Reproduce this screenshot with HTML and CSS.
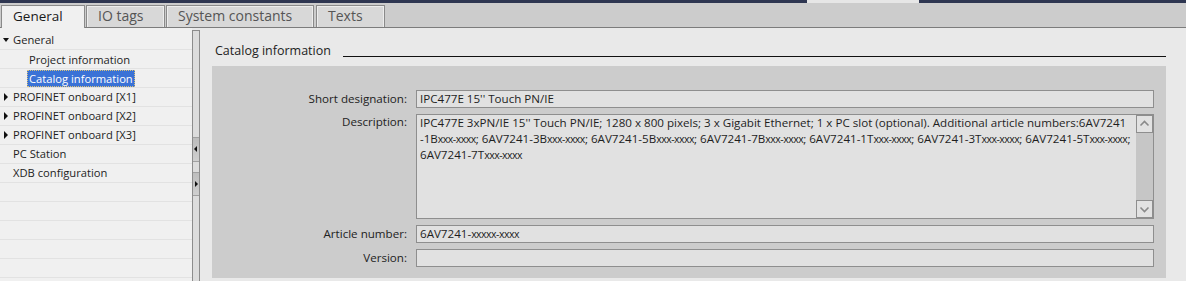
FILE: index.html
```html
<!DOCTYPE html>
<html lang="en">
<head>
  <meta charset="UTF-8">
  <title>Properties - Catalog information</title>
  <link rel="stylesheet" href="styles.css">
</head>
<body>
  <div class="topbar"><span class="topbar-mark"></span></div>
  <div class="tabbar">
    <div class="tab active" style="width:84px">General</div>
    <div class="tab" style="width:79px">IO tags</div>
    <div class="tab" style="width:148px">System constants</div>
    <div class="tab" style="width:69px">Texts</div>
  </div>
  <div class="main">
    <div class="tree">
      <div class="row"><span class="caret down"></span>General</div>
      <div class="row sub"><span class="item">Project information</span></div>
      <div class="row sub"><span class="item sel">Catalog information</span></div>
      <div class="row"><span class="caret right"></span>PROFINET onboard [X1]</div>
      <div class="row"><span class="caret right"></span>PROFINET onboard [X2]</div>
      <div class="row"><span class="caret right"></span>PROFINET onboard [X3]</div>
      <div class="row"><span class="caret"></span>PC Station</div>
      <div class="row"><span class="caret"></span>XDB configuration</div>
      <div class="row"></div>
      <div class="row"></div>
      <div class="row"></div>
      <div class="row"></div>
      <div class="row"></div>
      <div class="row"></div>
    </div>
    <div class="splitter">
      <div class="split-btn"><span class="arrow left"></span></div>
      <div class="split-btn"><span class="arrow right"></span></div>
    </div>
    <div class="content">
      <div class="heading"><span>Catalog information</span><span class="rule"></span></div>
      <div class="group">
        <div class="label">Short designation:</div>
        <div class="field">IPC477E 15'' Touch PN/IE</div>

        <div class="label top">Description:</div>
        <div class="memo">
          <div class="memo-text">IPC477E 3xPN/IE 15'' Touch PN/IE; 1280 x 800 pixels; 3 x Gigabit Ethernet; 1 x PC slot (optional). Additional article numbers:6AV7241<br>-1B<span class="x">xxx-xxxx</span>; 6AV7241-3B<span class="x">xxx-xxxx</span>; 6AV7241-5B<span class="x">xxx-xxxx</span>; 6AV7241-7B<span class="x">xxx-xxxx</span>; 6AV7241-1T<span class="x">xxx-xxxx</span>; 6AV7241-3T<span class="x">xxx-xxxx</span>; 6AV7241-5T<span class="x">xxx-xxxx</span>;<br>6AV7241-7T<span class="x">xxx-xxxx</span></div>
          <div class="vscroll">
            <div class="sbtn"><svg width="15" height="16" viewBox="0 0 15 16"><polyline points="3.5,9.5 7.5,5.5 11.5,9.5" fill="none" stroke="#8a8a8a" stroke-width="1.6"/></svg></div>
            <div class="sbtn"><svg width="15" height="16" viewBox="0 0 15 16"><polyline points="3.5,6.5 7.5,10.5 11.5,6.5" fill="none" stroke="#8a8a8a" stroke-width="1.6"/></svg></div>
          </div>
        </div>

        <div class="label">Article number:</div>
        <div class="field">6AV7241-<span class="x">xxxxx-xxxx</span></div>

        <div class="label">Version:</div>
        <div class="field"></div>
      </div>
    </div>
  </div>
</body>
</html>
```

FILE: styles.css
```css
body { margin: 0; width: 1186px; height: 281px; overflow: hidden; background: #e9e9e9; font-family: "Open Sans", "Liberation Sans", sans-serif; font-size: 11.6px; color: #1e1e1e; }

.topbar { height: 3px; background: #2e3651; display: flex; }
.topbar-mark { margin-left: 807px; width: 112px; background: #e6e6e6; }

.tabbar { height: 24px; background: #cccccc; border-bottom: 1px solid #7c7c7c; display: flex; align-items: flex-end; gap: 1px; padding-left: 1px; }
.tab { height: 22px; box-sizing: border-box; border: 1px solid #8a8a8a; border-bottom: none; padding-left: 11px; line-height: 20px; font-size: 14px; color: #555; background: #d8d8d8; box-shadow: inset 1px 1px 0 #ededed, inset -1px 0 0 #ededed; white-space: nowrap; flex: none; }
.tab.active { height: 23px; margin-bottom: -1px; background: #f0f0f0; color: #1a1a1a; box-shadow: none; font-size: 13.5px; }
.tab:last-child { margin-left: 1px; }

.main { display: flex; height: 253px; overflow: hidden; }

.tree { width: 192px; flex: none; padding-top: 3px; background: #f0f0f0; }
.row { height: 18px; border-bottom: 1px solid #e2e2e2; padding-left: 2px; line-height: 18px; font-size: 11.2px; white-space: nowrap; display: flex; align-items: center; }
.row.sub { padding-left: 27px; }
.caret { width: 11px; height: 18px; position: relative; flex: none; }
.caret.down::before { content: ""; position: absolute; left: 1px; top: 7px; border-left: 3.5px solid transparent; border-right: 3.5px solid transparent; border-top: 4px solid #111; }
.caret.right::before { content: ""; position: absolute; left: 2px; top: 5px; border-top: 4px solid transparent; border-bottom: 4px solid transparent; border-left: 4px solid #111; }
.item { padding: 0 2px; height: 17px; line-height: 17px; }
.item.sel { background: #3a72d6; color: #fff; outline: 1px dotted #d9c27a; outline-offset: -1px; }

.splitter { width: 6px; flex: none; margin-top: 2px; border: 1px solid #8c8c8c; border-bottom: none; background: #dcdcdc; padding-top: 106px; display: flex; flex-direction: column; gap: 10px; }
.split-btn { height: 23px; border-top: 1px solid #a0a0a0; border-bottom: 1px solid #a0a0a0; background: linear-gradient(#bdbdbd, #cfcfcf); position: relative; }
.split-btn + .split-btn { height: 22px; }
.arrow { position: absolute; top: 8px; border-top: 3px solid transparent; border-bottom: 3px solid transparent; }
.arrow.left { left: 1px; border-right: 3px solid #111; }
.arrow.right { left: 2px; border-left: 3px solid #111; }

.content { flex: 1; padding: 0 20px 0 12px; }
.heading { display: flex; margin-top: 14px; height: 18px; line-height: 18px; font-size: 12.5px; color: #222; margin-bottom: 6px; padding-left: 3px; }
.rule { flex: 1; margin-left: 12px; margin-bottom: 3px; border-bottom: 1px solid #111; }

.group { background: #cccccc; padding: 24px 12px 11px 0; display: grid; grid-template-columns: 195px 1fr; column-gap: 9px; row-gap: 6px; }
.label { text-align: right; line-height: 18px; color: #222; }
.label.top { line-height: 15.5px; }
.field { height: 18px; box-sizing: border-box; border: 1px solid #8e8e8e; background: #e1e1e1; padding-left: 3px; line-height: 16px; white-space: nowrap; }
.memo { height: 105px; box-sizing: border-box; border: 1px solid #8e8e8e; background: #e1e1e1; display: flex; }
.memo-text { flex: 1; padding-left: 3px; line-height: 15.5px; white-space: nowrap; overflow: hidden; }
.x { font-size: 10.5px; letter-spacing: -0.5px; }
.vscroll { width: 17px; background: #c6c6c6; display: flex; flex-direction: column; justify-content: space-between; }
.sbtn { height: 18px; box-sizing: border-box; border: 1px solid #8e8e8e; background: #e2e2e2; display: flex; justify-content: center; align-items: center; }
```
